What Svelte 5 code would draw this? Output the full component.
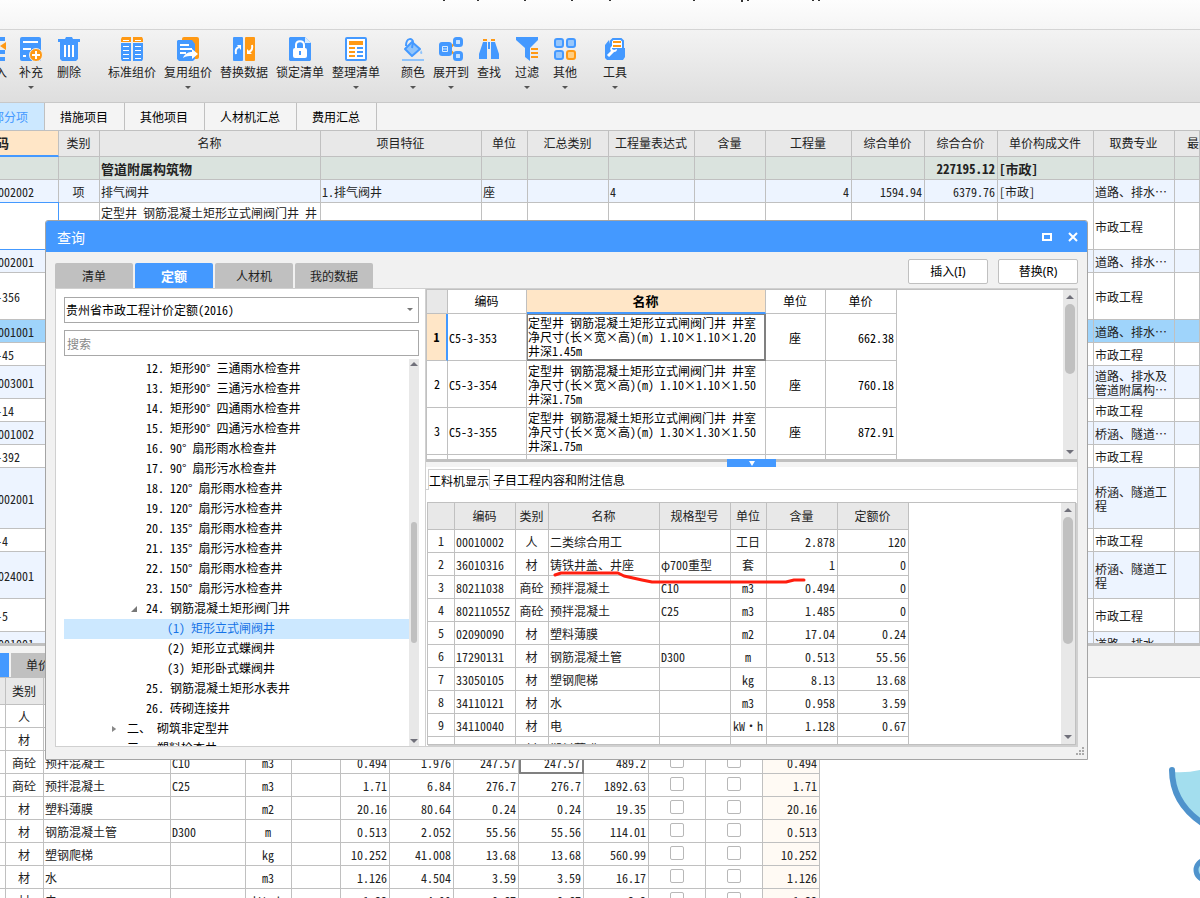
<script>
  const tools = [
    {
      cls: "cut",
      items: [
        { icon: "insert", label: "入" },
        { icon: "add", label: "补充", menu: true },
        { icon: "trash", label: "删除" },
      ],
    },
    {
      cls: "wide",
      items: [
        { icon: "standard", label: "标准组价" },
        { icon: "reuse", label: "复用组价", menu: true },
        { icon: "swap", label: "替换数据" },
        { icon: "lock", label: "锁定清单" },
        { icon: "arrange", label: "整理清单", menu: true },
      ],
    },
    {
      cls: "small",
      items: [
        { icon: "paint", label: "颜色", menu: true },
        { icon: "expand", label: "展开到", menu: true },
        { icon: "find", label: "查找" },
        { icon: "filter", label: "过滤", menu: true },
        { icon: "other", label: "其他", menu: true },
      ],
    },
    { cls: "last", items: [{ icon: "tools", label: "工具", menu: true }] },
  ];

  const pageTabs = ["部分项", "措施项目", "其他项目", "人材机汇总", "费用汇总"];

  const mainCols = [63, 41, 221, 161, 46, 81, 86, 71, 86, 73, 73, 96, 81];
  const mainHead = ["码", "类别", "名称", "项目特征", "单位", "汇总类别", "工程量表达式", "含量", "工程量", "综合单价", "综合合价", "单价构成文件", "取费专业", "最"];

  const mainRows = [
    { h: 23, code: "002002", kind: "item", cells: ["项", "排气阀井", "1.排气阀井", "座", "", "4", "", "4", "1594.94", "6379.76", "[市政]", "道路、排水⋯", ""] },
    { h: 47, code: "", kind: "editing", cells: ["", "定型井 钢筋混凝土矩形立式闸阀门井 井", "", "", "", "", "", "", "", "", "", "市政工程", ""] },
  ];

  // rows mostly covered by the dialog only carry a code and a trade
  const codeRows = [
    [23, "002001", "道路、排水⋯"],
    [47, "-356", "市政工程"],
    [23, "001001", "道路、排水⋯", true],
    [23, "-45", "市政工程"],
    [33, "003001", "道路、排水及管道附属构⋯"],
    [23, "-14", "市政工程"],
    [23, "001002", "桥涵、隧道⋯"],
    [23, "-392", "市政工程"],
    [61, "002001", "桥涵、隧道工程"],
    [23, "-4", "市政工程"],
    [47, "024001", "桥涵、隧道工程"],
    [33, "-5", "市政工程"],
    [23, "001001", "道路、排水⋯"],
  ];
  for (const [h, code, trade, current] of codeRows) {
    const kind = current ? "current" : code.startsWith("-") ? "sub" : "item";
    mainRows.push({ h, code, kind, cells: [...Array(11).fill(""), trade, ""] });
  }

  const align = ["c", "", "", "", "", "", "", "r", "r", "r", "", "", ""];

  const costCols = [6, 38, 127, 75, 46, 49, 49, 64, 65, 65, 65, 57, 57, 57];
  const costRows = [
    ["人", "", "", "", "", "", "", "", "", "", ""],
    ["材", "", "", "", "", "", "", "", "", "", ""],
    ["商砼", "预拌混凝土", "C10", "m3", "", "0.494", "1.976", "247.57", "247.57", "489.2", "0.494"],
    ["商砼", "预拌混凝土", "C25", "m3", "", "1.71", "6.84", "276.7", "276.7", "1892.63", "1.71"],
    ["材", "塑料薄膜", "", "m2", "", "20.16", "80.64", "0.24", "0.24", "19.35", "20.16"],
    ["材", "钢筋混凝土管", "D300", "m", "", "0.513", "2.052", "55.56", "55.56", "114.01", "0.513"],
    ["材", "塑钢爬梯", "", "kg", "", "10.252", "41.008", "13.68", "13.68", "560.99", "10.252"],
    ["材", "水", "", "m3", "", "1.126", "4.504", "3.59", "3.59", "16.17", "1.126"],
    ["材", "电", "", "kW·h", "", "1.33", "4.99", "0.67", "0.67", "3.3", "1.33"],
  ];

  const dialogTabs = ["清单", "定额", "人材机", "我的数据"];
  let activeTab = $state("定额");
  let keyword = $state("");
  let selected = $state("(1) 矩形立式闸阀井");

  const tree = [
    [3, "12. 矩形90° 三通雨水检查井"],
    [3, "13. 矩形90° 三通污水检查井"],
    [3, "14. 矩形90° 四通雨水检查井"],
    [3, "15. 矩形90° 四通污水检查井"],
    [3, "16. 90° 扇形雨水检查井"],
    [3, "17. 90° 扇形污水检查井"],
    [3, "18. 120° 扇形雨水检查井"],
    [3, "19. 120° 扇形污水检查井"],
    [3, "20. 135° 扇形雨水检查井"],
    [3, "21. 135° 扇形污水检查井"],
    [3, "22. 150° 扇形雨水检查井"],
    [3, "23. 150° 扇形污水检查井"],
    [3, "24. 钢筋混凝土矩形阀门井", "open"],
    [4, "(1) 矩形立式闸阀井"],
    [4, "(2) 矩形立式蝶阀井"],
    [4, "(3) 矩形卧式蝶阀井"],
    [3, "25. 钢筋混凝土矩形水表井"],
    [3, "26. 砖砌连接井"],
    [2, "二、 砌筑非定型井", "closed"],
    [2, "三、 塑料检查井"],
  ];

  const quotaCols = [21, 79, 239, 60, 71];
  const quotas = [
    ["C5-3-353", "1.10×1.10×1.20", "1.45", "662.38"],
    ["C5-3-354", "1.10×1.10×1.50", "1.75", "760.18"],
    ["C5-3-355", "1.30×1.30×1.50", "1.75", "872.91"],
  ];

  const partCols = [27, 61, 33, 111, 71, 36, 71, 71];
  const partHead = ["", "编码", "类别", "名称", "规格型号", "单位", "含量", "定额价"];
  const parts = [
    ["00010002", "人", "二类综合用工", "", "工日", "2.878", "120"],
    ["36010316", "材", "铸铁井盖、井座", "φ700重型", "套", "1", "0"],
    ["80211038", "商砼", "预拌混凝土", "C10", "m3", "0.494", "0"],
    ["80211055Z", "商砼", "预拌混凝土", "C25", "m3", "1.485", "0"],
    ["02090090", "材", "塑料薄膜", "", "m2", "17.04", "0.24"],
    ["17290131", "材", "钢筋混凝土管", "D300", "m", "0.513", "55.56"],
    ["33050105", "材", "塑钢爬梯", "", "kg", "8.13", "13.68"],
    ["34110121", "材", "水", "", "m3", "0.958", "3.59"],
    ["34110040", "材", "电", "", "kW·h", "1.128", "0.67"],
    ["", "材", "塑料薄膜", "", "", "", ""],
  ];
</script>

{#snippet icon(name)}
  <svg width="24" height="24" viewBox="0 0 24 24" fill="none" aria-hidden="true">
    {#if name === "insert"}
      <path d="M0 2h16M0 15h16M0 22h16" stroke="#4499ff" stroke-width="4" />
      <path d="M17 5v8l-6-4z" fill="#ff9914" />
    {:else if name === "add"}
      <rect x="1" width="21" height="24" rx="2" fill="#4499ff" />
      <path d="M4 5h15M4 12h8M4 19h3" stroke="#fff" stroke-width="2" />
      <circle cx="17" cy="18" r="6.5" fill="#ff9914" stroke="#f0f0f0" />
      <path d="M17 14v8M13 18h8" stroke="#fff" stroke-width="2" />
    {:else if name === "trash"}
      <path d="M1 2h7l1-2h6l1 2h7v3H1zM3 5h18v17l-2 2H5l-2-2z" fill="#4499ff" />
      <path d="M8 8v12M12 8v12M16 8v12" stroke="#fff" stroke-width="2" />
    {:else if name === "standard"}
      <path d="M1 2l1-2h9v5H1zM13 0h9l1 2v3H13z" fill="#ff9914" />
      <path d="M1 6h10v18H2l-1-2zM13 6h10v16l-1 2h-9z" fill="#4499ff" />
      <path d="M3 3.500h6M15 3.500h6M3 9.500h6M15 9.500h6M3 13.500h6M15 13.500h6M3 17.500h6M15 17.500h6M3 21.500h6M15 21.500h6" stroke="#fff" />
    {:else if name === "reuse"}
      <rect x="6" width="17" height="22" rx="2" fill="#ff9914" />
      <path d="M2 3h14l3 4v15l-2 2H3l-2-2V4z" fill="#4499ff" />
      <path d="M4 8h9M4 12h12M4 16h6" stroke="#fff" stroke-width="2" />
      <path d="M7 21c2-5 6-6 9-6v-3l6 5-6 5v-3c-3 0-6 0-9 2z" fill="#fff" />
    {:else if name === "swap"}
      <rect x="1" width="10" height="24" rx="1" fill="#4499ff" />
      <rect x="13" width="10" height="24" rx="1" fill="#ff9914" />
      <path d="M4 17c-1-4 0-6 3-7M20 8c1 4-1 6-3 7" stroke="#fff" stroke-width="2" />
      <path d="M5 8h4v5zM15 12v5h5z" fill="#fff" />
    {:else if name === "lock"}
      <path d="M1 1l1-1h15l6 6v17l-1 1H2l-1-1z" fill="#4499ff" />
      <path d="M17 0v6h6z" fill="#d8ecff" />
      <rect x="5" y="11" width="14" height="10" rx="2" fill="#fff" />
      <path d="M8 12V8c0-5 8-5 8 0v4" stroke="#fff" stroke-width="2" />
      <path d="M12 14v4" stroke="#4499ff" stroke-width="2" />
    {:else if name === "arrange"}
      <rect x="2" y="1" width="20" height="22" rx="1" fill="#fff" stroke="#4499ff" stroke-width="2" />
      <path d="M5 6h14" stroke="#ff9914" stroke-width="4" />
      <path d="M5 11h6M5 15h6M5 19h6" stroke="#ff9914" stroke-width="2" />
      <path d="M13 11h6M13 15h6M13 19h6" stroke="#4499ff" stroke-width="2" />
    {:else if name === "paint"}
      <path d="M11 5l8 7-8 7-7-7z" fill="#90c4fb" stroke="#4499ff" stroke-width="2" stroke-linejoin="round" />
      <path d="M5 9c0-9 7-8 7-4l-1 6" stroke="#4499ff" stroke-width="2" />
      <path d="M20 13c3 4 0 5-1 3z" fill="#90c4fb" />
      <path d="M1 23h22" stroke="#90c4fb" stroke-width="2" />
    {:else if name === "expand"}
      <path d="M11 11l6-6M11 13l6 6" stroke="#ff9914" stroke-width="2" />
      <rect y="5" width="13" height="14" rx="3" fill="#4499ff" />
      <rect x="15.500" y="1.500" width="7" height="7" rx="2" fill="#c8e2ff" stroke="#4499ff" stroke-width="3" />
      <rect x="15.500" y="15.500" width="7" height="7" rx="2" fill="#c8e2ff" stroke="#4499ff" stroke-width="3" />
      <path d="M3.500 9.500h5v5h-5zM3.500 12h5" stroke="#d8ecff" />
    {:else if name === "find"}
      <path d="M6 3h4M14 3h4" stroke="#ff9914" stroke-width="2" />
      <path d="M6 5h4v17H2v-5zM14 5h4l4 12v5h-8zM11 5h2v7h-2z" fill="#4499ff" />
    {:else if name === "filter"}
      <path d="M1 0h22v3l-8 8v13l-5-4v-9L1 3z" fill="#4499ff" />
      <path d="M16 12h7M16 16h7M16 20h7" stroke="#ff9914" stroke-width="2" />
    {:else if name === "other"}
      <g fill="#98c7fb" stroke="#4499ff" stroke-width="2">
        <rect x="2" y="2" width="8" height="8" rx="2" />
        <rect x="14" y="2" width="8" height="8" rx="2" />
        <rect x="2" y="14" width="8" height="8" rx="2" />
        <rect x="14" y="14" width="8" height="8" rx="2" fill="#ffce82" stroke="#ff9914" />
      </g>
    {:else}
      <path d="M8 14V4l2-2h8l2 2v10" fill="#fff" stroke="#4499ff" stroke-width="2" />
      <path d="M10 5h8M10 9h8" stroke="#ff9914" stroke-width="2" />
      <path d="M2 8l4-5 2 8h14v9l-2 3H4l-2-2z" fill="#4499ff" />
      <path d="M5 19l5-5" stroke="#fff" stroke-width="3" />
      <path d="M9 9c-3 2-2 6 2 6 2 0 3-1 3-3l-3 1-2-1z" fill="#fff" />
    {/if}
  </svg>
{/snippet}

{#snippet scrollbar(before, size, after)}
  <div class="scrollbar">
    <span class="arrow up"></span>
    <span style="flex: {before}"></span>
    <span class="thumb" style="flex: {size}"></span>
    <span style="flex: {after}"></span>
    <span class="arrow down"></span>
  </div>
{/snippet}

{#snippet cols(widths)}
  <colgroup>
    {#each widths as w}
      <col style="width: {w}px" />
    {/each}
  </colgroup>
{/snippet}

<div class="app">
  <header class="caption">
    <svg width="400" height="3" viewBox="0 0 400 3" aria-hidden="true">
      <path d="M3 0h2M37 0h2M84 0h2M131 0h2M169 0h2M253 0h2M307 0h2M372 0h2M378 0h2" stroke="#333" stroke-width="2" />
      <path d="M301 0h2" stroke="#333" stroke-width="4" />
    </svg>
  </header>

  <nav class="toolbar">
    {#each tools as group}
      <div class="group {group.cls}">
        {#each group.items as tool}
          <button class="tool">
            {@render icon(tool.icon)}
            <span>{tool.label}</span>
            {#if tool.menu}<i class="caret"></i>{/if}
          </button>
        {/each}
      </div>
    {/each}
  </nav>

  <nav class="page-tabs">
    {#each pageTabs as tab, i}
      <button class:on={i === 0}>{tab}</button>
    {/each}
  </nav>

  <section class="main-grid">
    <table>
      {@render cols(mainCols)}
      <thead>
        <tr style="height: 26px">
          {#each mainHead as title, i}
            <th class:code-head={i === 0} class:edge={i === 13}>{title}</th>
          {/each}
        </tr>
      </thead>
      <tbody>
        <tr class="total" style="height: 23px">
          <td></td>
          <td></td>
          <td>管道附属构筑物</td>
          {#each Array(7) as _}<td></td>{/each}
          <td class="r">227195.12</td>
          <td>[市政]</td>
          <td></td>
          <td></td>
        </tr>
        {#each mainRows as row}
          <tr class={row.kind} style="height: {row.h}px">
            <td class="code">{row.code}</td>
            {#each row.cells as cell, i}
              <td class={align[i]}>{cell}</td>
            {/each}
          </tr>
        {/each}
      </tbody>
    </table>
  </section>

  <section class="detail">
    <nav class="detail-tabs">
      <button class="on" aria-label="工料机显示"></button>
      <button>单价</button>
    </nav>
    <div class="detail-body">
      <table class="cost">
        {@render cols(costCols)}
        <thead>
          <tr style="height: 27px">
            <th></th>
            <th>类别</th>
            {#each Array(12) as _}<th></th>{/each}
          </tr>
        </thead>
        <tbody>
          {#each costRows as row, n}
            <tr style="height: 23px">
              <td></td>
              {#each row.slice(0, 10) as cell, i}
                <td class:c={i === 0 || i === 3} class:r={i > 4} class:focus={n === 2 && i === 8}>{cell}</td>
              {/each}
              <td class="check"><input type="checkbox" aria-label="是否暂估" /></td>
              <td class="check"><input type="checkbox" aria-label="锁定" /></td>
              <td class="r origin">{row[10]}</td>
            </tr>
          {/each}
        </tbody>
      </table>
      <svg class="mascot" width="32" height="132" viewBox="0 0 32 132" fill="none" aria-hidden="true">
        <path d="M5 6q14 1 27-2v54C15 45 7 29 5 6z" fill="#a3deee" />
        <path d="M4 4C4 27 15 44 34 57" stroke="#4f93cc" stroke-width="6" stroke-linecap="round" />
        <circle cx="38" cy="104" r="10" fill="#a3deee" stroke="#4f93cc" stroke-width="5" />
      </svg>
    </div>
  </section>

  <div class="dialog" role="dialog" aria-label="查询">
    <header class="title">
      <h1>查询</h1>
      <button aria-label="最大化">
        <svg width="12" height="12" viewBox="0 0 12 12"><path d="M2 3h8v6H2z" fill="none" stroke="#fff" stroke-width="2" /></svg>
      </button>
      <button aria-label="关闭">
        <svg width="12" height="12" viewBox="0 0 12 12"><path d="M2 2l8 8M10 2l-8 8" fill="none" stroke="#fff" stroke-width="2" /></svg>
      </button>
    </header>

    <div class="dialog-bar">
      {#each dialogTabs as tab}
        <button class="tab" class:on={tab === activeTab} onclick={() => (activeTab = tab)}>{tab}</button>
      {/each}
      <span class="spacer"></span>
      <button class="action">插入(I)</button>
      <button class="action">替换(R)</button>
    </div>

    <div class="panes">
      <div class="left">
        <div class="picker">
          <select aria-label="定额库">
            <option>贵州省市政工程计价定额(2016)</option>
          </select>
          <i class="picker-caret"></i>
        </div>
        <input class="search" type="text" placeholder="搜索" aria-label="搜索" bind:value={keyword} />
        <div class="tree-box">
          <ul class="tree">
            {#each tree as [level, text, state]}
              <li>
                <button class="level{level}" class:on={text === selected} onclick={() => (selected = text)}>
                  <i class={state}></i>{text}
                </button>
              </li>
            {/each}
          </ul>
          {@render scrollbar(151, 120, 91)}
        </div>
      </div>

      <div class="right">
        <div class="quota-box">
          <div class="fill">
            <table class="quota" style="width: 470px">
              {@render cols(quotaCols)}
              <thead>
                <tr style="height: 24px">
                  <th class="corner"></th>
                  <th>编码</th>
                  <th class="sorted">名称</th>
                  <th>单位</th>
                  <th>单价</th>
                </tr>
              </thead>
              <tbody>
                {#each quotas as [code, size, depth, price], i}
                  <tr class:picked={i === 0} style="height: 47px">
                    <td class="num">{i + 1}</td>
                    <td>{code}</td>
                    <td class="name">定型井 钢筋混凝土矩形立式闸阀门井 井室净尺寸(长×宽×高)(m) {size} 井深{depth}m</td>
                    <td class="c">座</td>
                    <td class="r">{price}</td>
                  </tr>
                {/each}
                <tr style="height: 47px"><td></td><td></td><td></td><td></td><td></td></tr>
              </tbody>
            </table>
          </div>
          {@render scrollbar(0, 71, 72)}
        </div>

        <div class="splitter"><button aria-label="折叠"></button></div>

        <div class="sub-tabs">
          <button class="on">工料机显示</button>
          <button>子目工程内容和附注信息</button>
        </div>

        <div class="part-box">
          <div class="fill">
            <table class="part" style="width: 481px">
              {@render cols(partCols)}
              <thead>
                <tr style="height: 27px">
                  {#each partHead as title}<th>{title}</th>{/each}
                </tr>
              </thead>
              <tbody>
                {#each parts as row, n}
                  <tr style="height: 23px">
                    <td class="num">{n < 9 ? n + 1 : ""}</td>
                    {#each row as cell, i}
                      <td class:c={i === 1 || i === 4} class:r={i > 4}>{cell}</td>
                    {/each}
                  </tr>
                {/each}
              </tbody>
            </table>
          </div>
          {@render scrollbar(0, 126, 86)}
          <svg class="stroke" width="256" height="16" viewBox="0 0 256 16" fill="none" aria-hidden="true">
            <path d="M3 6l6-2h57l6 3 18 4 10 2h134l8-2h10" stroke="#ff1e0f" stroke-width="3" stroke-linecap="round" stroke-linejoin="round" />
          </svg>
        </div>
      </div>
    </div>
    <svg class="grip" width="9" height="9" viewBox="0 0 9 9" aria-hidden="true">
      <path d="M6 1h2M3 4h2M6 4h2M0 7h2M3 7h2M6 7h2" stroke="#aaa" stroke-width="2" />
    </svg>
  </div>
</div>

<style>
  :global(body) {
    margin: 0;
  }

  .app {
    position: relative;
    display: flex;
    flex-direction: column;
    height: 100vh;
    overflow: hidden;
    background: #fff;
    color: #222;
    font-family: "Noto Sans Mono CJK SC", "Noto Sans CJK SC", sans-serif;
    font-feature-settings: "hwid";
    font-size: 12px;
    line-height: 14px;
  }

  button,
  input,
  select {
    box-sizing: border-box;
    margin: 0;
    padding: 0;
    border: none;
    background: none;
    color: inherit;
    font: inherit;
    font-feature-settings: inherit;
  }

  .caption {
    box-sizing: border-box;
    flex: none;
    height: 30px;
    padding-left: 440px;
    border-bottom: 1px solid #d4d4d4;
    background: linear-gradient(#fdfdfd, #f5f5f5);
  }

  .caption svg {
    display: block;
  }

  .toolbar {
    box-sizing: border-box;
    display: flex;
    flex: none;
    height: 73px;
    border-bottom: 1px solid #c8c8c8;
    background: linear-gradient(#f3f3f3, #dedede);
  }

  .group {
    display: flex;
    flex: none;
  }

  .tool {
    display: flex;
    flex-direction: column;
    align-items: center;
    width: 38px;
    padding-top: 7px;
    white-space: nowrap;
  }

  .tool svg {
    flex: none;
  }

  .tool span {
    margin-top: 4px;
  }

  .cut {
    margin-left: -10px;
  }

  .cut .tool:first-child {
    width: 22px;
  }

  .wide {
    margin-left: 16px;
  }

  .wide .tool {
    width: 56px;
  }

  .small {
    margin-left: 10px;
  }

  .last {
    margin-left: 12px;
  }

  .caret {
    margin-top: 7px;
    border: 3px solid transparent;
    border-top-color: #555;
    border-bottom: none;
  }

  .page-tabs {
    box-sizing: border-box;
    display: flex;
    flex: none;
    height: 27px;
    background: #f4f4f4;
  }

  .page-tabs button {
    padding: 0 16px 0 15px;
    border-right: 1px solid #c0c0c0;
    color: #000;
    white-space: nowrap;
  }

  .page-tabs .on {
    width: 45px;
    padding: 0 16px 0 0;
    direction: rtl;
    background: #cce8ff;
    color: #4499ff;
  }

  table {
    table-layout: fixed;
    border-collapse: separate;
    border-spacing: 0;
  }

  th,
  td {
    box-sizing: border-box;
    overflow: hidden;
    padding: 1px 2px 0 1px;
    border-right: 1px solid #c0c0c0;
    border-bottom: 1px solid #c0c0c0;
    text-align: left;
  }

  th {
    padding: 0 2px 1px 1px;
    background: #e8e8e8;
    font-weight: normal;
    text-align: center;
    white-space: nowrap;
  }

  .c {
    text-align: center;
  }

  .r {
    text-align: right;
  }

  .main-grid {
    box-sizing: border-box;
    flex: none;
    height: 516px;
    margin-left: -4px;
    overflow: hidden;
    border-top: 1px solid #c0c0c0;
    border-bottom: 3px solid #c0c0c0;
  }

  .main-grid table {
    width: 100%;
  }

  .main-grid .code-head {
    padding: 0;
    border-bottom: 2px solid #4499ff;
    background: #ffe6c7;
    font-size: 13px;
    font-weight: bold;
    text-align: left;
  }

  .main-grid .edge {
    padding-left: 12px;
    text-align: left;
  }

  .total td {
    background: #dae3de;
    font-size: 13px;
    font-weight: bold;
    white-space: nowrap;
  }

  .item td {
    background: #edf4ff;
  }

  .current td {
    background: #9fd4fb;
  }

  .code {
    padding-left: 2px;
  }

  .sub .code {
    padding-left: 0;
  }

  .editing td {
    padding-top: 3px;
    vertical-align: top;
    white-space: nowrap;
  }

  .editing td:nth-child(13) {
    padding-top: 1px;
    vertical-align: middle;
  }

  .editing .code {
    border-color: #4499ff;
    box-shadow: 0 -1px #4499ff;
  }

  .detail {
    display: flex;
    flex: 1;
    flex-direction: column;
    min-height: 0;
  }

  .detail-tabs {
    display: flex;
    flex: none;
    gap: 2px;
    align-items: flex-end;
    height: 31px;
    border-bottom: 1px solid #c0c0c0;
    background: #f3f3f3;
  }

  .detail-tabs button {
    width: 78px;
    height: 24px;
    padding-right: 24px;
    background: #c0c0c0;
  }

  .detail-tabs .on {
    width: 9px;
    padding: 0;
    background: #4499ff;
  }

  .detail-body {
    display: flex;
    flex: 1;
    justify-content: space-between;
    align-items: flex-start;
    min-height: 0;
    overflow: hidden;
  }

  .cost {
    flex: none;
    width: 820px;
  }

  .cost .focus {
    border: 2px solid #808080;
    border-top-width: 1px;
  }

  .cost .origin {
    background: #fffaf4;
  }

  .check {
    padding: 0 2px 3px;
    text-align: center;
  }

  input[type="checkbox"] {
    appearance: none;
    width: 14px;
    height: 14px;
    border: 1px solid #b8b8b8;
    border-radius: 2px;
    background: #fff;
    vertical-align: middle;
  }

  .mascot {
    flex: none;
    margin-top: 88px;
  }

  .dialog {
    position: absolute;
    top: 220px;
    right: 112px;
    bottom: 138px;
    left: 45px;
    display: flex;
    flex-direction: column;
    box-sizing: border-box;
    padding-bottom: 12px;
    border: 1px solid #a4a4a4;
    border-radius: 3px 3px 0 0;
    background: #f1f1f1;
    color: #000;
    overflow: hidden;
  }

  .title {
    display: flex;
    flex: none;
    align-items: center;
    gap: 14px;
    height: 31px;
    padding: 0 8px 0 11px;
    background: #4499ff;
    color: #fff;
  }

  .title h1 {
    flex: 1;
    margin: 0;
    font-size: 14px;
    font-weight: normal;
  }

  .title svg {
    display: block;
  }

  .dialog-bar {
    display: flex;
    flex: none;
    gap: 2px;
    align-items: flex-end;
    height: 36px;
    margin: 0 9px;
  }

  .tab {
    width: 78px;
    height: 25px;
    border-radius: 2px 2px 0 0;
    background: #c0c0c0;
    color: #222;
  }

  .tab.on {
    background: #4499ff;
    color: #fff;
    font-size: 13px;
    font-weight: bold;
  }

  .spacer {
    flex: 1;
  }

  .action {
    width: 80px;
    height: 25px;
    margin: 0 0 4px 8px;
    border: 1px solid #c0c0c0;
    border-radius: 2px;
    background: #fff;
    font-family: "Noto Sans", "Noto Sans CJK SC", sans-serif;
    font-feature-settings: normal;
  }

  .panes {
    display: flex;
    flex: 1;
    min-height: 0;
    margin: 0 9px;
    border: 1px solid #d0d0d0;
    background: #fff;
  }

  .left {
    display: flex;
    flex: none;
    flex-direction: column;
    box-sizing: border-box;
    width: 369px;
    padding: 8px 6px 0 8px;
  }

  .picker {
    position: relative;
    flex: none;
    height: 26px;
    margin-bottom: 7px;
  }

  select,
  .search {
    width: 100%;
    height: 26px;
    padding: 0 1px;
    border: 1px solid #a8a8a8;
    border-radius: 0;
    background: #fff;
  }

  select {
    appearance: none;
  }

  .picker-caret {
    position: absolute;
    top: 11px;
    right: 6px;
    border: 3px solid transparent;
    border-top-color: #777;
    border-bottom: none;
    pointer-events: none;
  }

  .search {
    flex: none;
    margin-bottom: 3px;
    padding: 0 2px;
  }

  .search::placeholder {
    color: #888;
  }

  .tree-box {
    display: flex;
    flex: 1;
    min-height: 0;
  }

  .tree {
    flex: 1;
    overflow: hidden;
    margin: 0;
    padding: 0;
    list-style: none;
  }

  .tree button {
    display: flex;
    align-items: center;
    width: 100%;
    height: 20px;
    padding-bottom: 2px;
    white-space: pre;
  }

  .tree i {
    flex: none;
    width: 6px;
    height: 6px;
    margin: 2px 9px 0 0;
  }

  .tree .level2 {
    padding-left: 48px;
  }

  .tree .level3 {
    padding-left: 67px;
  }

  .tree .level4 {
    padding-left: 88px;
  }

  .tree .open {
    background: #777;
    clip-path: polygon(100% 0, 100% 100%, 0 100%);
  }

  .tree .closed {
    background: #888;
    clip-path: polygon(0 0, 70% 50%, 0 100%);
  }

  .tree .on {
    background: #cce8ff;
    color: #1673e6;
  }

  .scrollbar {
    display: flex;
    flex: none;
    flex-direction: column;
    align-items: center;
    width: 14px;
    background: #e8e8e8;
  }

  .tree-box .scrollbar {
    width: 10px;
  }

  .thumb {
    width: 10px;
    border-radius: 5px;
    background: #c0c0c0;
  }

  .tree-box .thumb {
    width: 6px;
  }

  .arrow {
    margin: 5px 0;
    border: 4px solid transparent;
  }

  .tree-box .up {
    margin-top: 3px;
  }

  .tree-box .down {
    margin-bottom: 3px;
  }

  .up {
    border-top: none;
    border-bottom-color: #70707a;
  }

  .down {
    border-bottom: none;
    border-top-color: #70707a;
  }

  .right {
    display: flex;
    flex: 1;
    flex-direction: column;
    min-width: 0;
    border-left: 1px solid #d0d0d0;
  }

  .fill {
    flex: 1;
    min-width: 0;
    overflow: hidden;
  }

  .quota-box {
    display: flex;
    flex: none;
    box-sizing: border-box;
    height: 170px;
    border-top: 1px solid #c0c0c0;
    border-left: 1px solid #c0c0c0;
  }

  .quota th {
    background: #fff;
  }

  .quota .corner {
    background: #e8e8e8;
  }

  .quota .sorted {
    border-bottom: 2px solid #4499ff;
    background: #ffe6c7;
    font-size: 13px;
    font-weight: bold;
  }

  .num {
    padding: 0;
    text-align: center;
  }

  .picked .num {
    border-right: 2px solid #4499ff;
    background: #ffe6c7;
    font-weight: bold;
  }

  .picked .name {
    padding-right: 1px;
    border-right: 2px solid #808080;
    border-bottom: 2px solid #808080;
    box-shadow: inset 1px 1px #808080;
  }

  .splitter {
    position: relative;
    flex: none;
    height: 5px;
    border-top: 3px solid #c0c0c0;
    background: #f3f3f3;
  }

  .splitter button {
    position: absolute;
    top: -3px;
    left: 301px;
    display: flex;
    justify-content: center;
    align-items: center;
    width: 49px;
    height: 8px;
    background: #4499ff;
  }

  .splitter button::after {
    content: "";
    border: 3px solid transparent;
    border-top: 5px solid #fff;
    border-bottom: none;
  }

  .sub-tabs {
    display: flex;
    flex: none;
    box-sizing: border-box;
    height: 23px;
    padding: 2px 0 0 2px;
    border-bottom: 1px solid #d0d0d0;
  }

  .sub-tabs button {
    padding: 2px 3px 0;
  }

  .sub-tabs .on {
    height: 21px;
    padding: 2px 0 0;
    border: 1px solid #d0d0d0;
    border-bottom: none;
    background: #fff;
  }

  .part-box {
    position: relative;
    display: flex;
    flex: 1;
    min-height: 0;
    margin: 12px 1px 1px;
    border: 1px solid #c0c0c0;
    box-shadow: 1px 1px #d0d0d0;
    color: #222;
  }

  .part td {
    padding-top: 2px;
  }

  .part .num {
    padding-top: 0;
  }

  .stroke {
    position: absolute;
    top: 66px;
    left: 124px;
  }

  .grip {
    position: absolute;
    right: 2px;
    bottom: 3px;
  }
</style>
